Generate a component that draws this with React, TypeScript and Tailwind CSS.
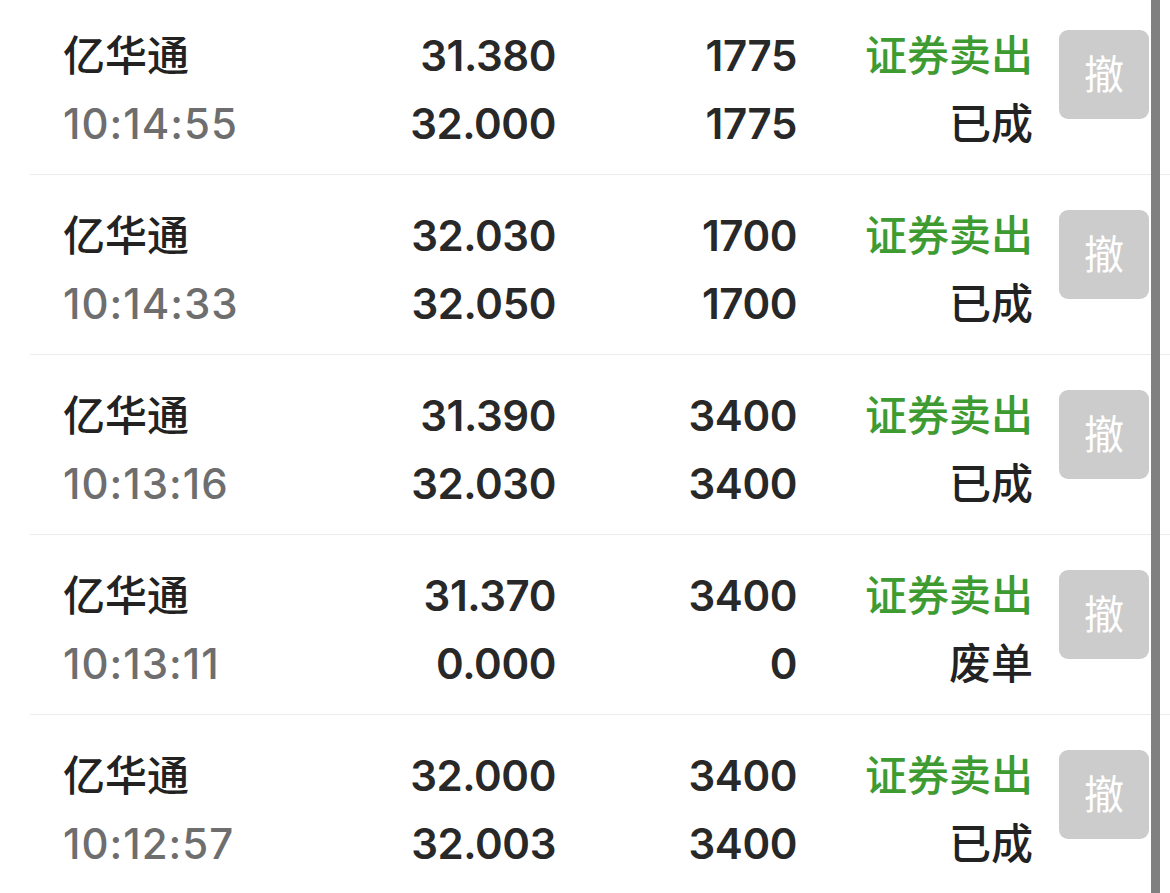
const orders = [
    { name: "亿华通", time: "10:14:55", price: "31.380", dealPrice: "32.000", qty: "1775", dealQty: "1775", status: "已成" },
    { name: "亿华通", time: "10:14:33", price: "32.030", dealPrice: "32.050", qty: "1700", dealQty: "1700", status: "已成" },
    { name: "亿华通", time: "10:13:16", price: "31.390", dealPrice: "32.030", qty: "3400", dealQty: "3400", status: "已成" },
    { name: "亿华通", time: "10:13:11", price: "31.370", dealPrice: "0.000", qty: "3400", dealQty: "0", status: "废单" },
    { name: "亿华通", time: "10:12:57", price: "32.000", dealPrice: "32.003", qty: "3400", dealQty: "3400", status: "已成" },
];

const font = { fontFamily: "Inter, 'Noto Sans CJK SC', sans-serif" };

export default function App() {
    return (
        <div className="relative w-[1170px] h-[893px] overflow-hidden bg-white" style={font}>
            <div className="-mt-[5px]">
                {orders.map((o, i) => (
                    <div key={i} className="ml-[30px] pl-[33px] pr-[21px] pt-[27px] pb-[16px] border-b border-[#ececec] flex items-start">
                        <div className="flex-1 flex flex-col text-[42px] leading-[68px]">
                            <span className="text-[#222222] font-medium">{o.name}</span>
                            <span className="text-[#6e6e6e] font-medium tracking-[1px]">{o.time}</span>
                        </div>
                        <div className="w-[227px] flex flex-col items-end text-[42px] leading-[68px] font-semibold text-[#282828] tracking-[-0.4px]">
                            <span>{o.price}</span>
                            <span>{o.dealPrice}</span>
                        </div>
                        <div className="w-[241px] flex flex-col items-end text-[42px] leading-[68px] font-semibold text-[#282828] tracking-[-0.4px]">
                            <span>{o.qty}</span>
                            <span>{o.dealQty}</span>
                        </div>
                        <div className="w-[236px] flex flex-col items-end text-[42px] leading-[68px]">
                            <span className="text-[#3d9b32] font-medium">证券卖出</span>
                            <span className="text-[#222222] font-medium">{o.status}</span>
                        </div>
                        <button className="ml-[26px] mt-[8px] w-[90px] h-[89px] rounded-[9px] bg-[#cccccc] text-white text-[40px] flex items-center justify-center">
                            撤
                        </button>
                    </div>
                ))}
            </div>
            <div className="absolute top-0 left-[1151px] w-[9px] h-full bg-[#808080]" />
        </div>
    );
}
